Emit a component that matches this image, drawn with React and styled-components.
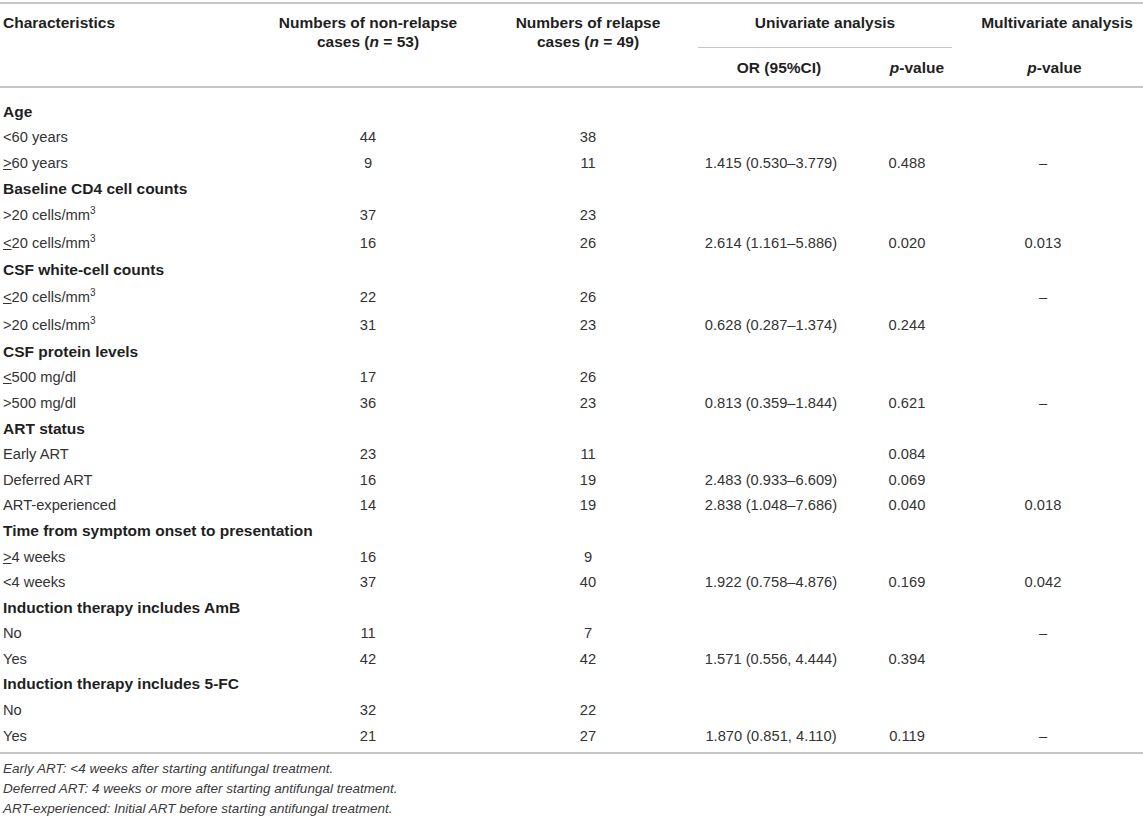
import React from "react";
import styled, { createGlobalStyle } from "styled-components";

const COLS = "262px 212px 228px 154px 110px 1fr";

const GlobalStyle = createGlobalStyle`
  body {
    margin: 0;
    background: #fff;
    font-family: "Liberation Sans", Arial, sans-serif;
    color: #2e2e2e;
  }
`;

// the source typesets ≤ / ≥ as an underlined < / >
const Le = () => <U>&lt;</U>;
const Ge = () => <U>&gt;</U>;
const Cells = () => (
  <>
    cells/mm<Sup>3</Sup>
  </>
);

const rows = [
  { label: "Age", section: true },
  { label: "<60 years", a: "44", b: "38" },
  { label: <><Ge />60 years</>, a: "9", b: "11", or: "1.415 (0.530–3.779)", p: "0.488", m: "–" },
  { label: "Baseline CD4 cell counts", section: true },
  { label: <>&gt;20 <Cells /></>, a: "37", b: "23", tall: true },
  { label: <><Le />20 <Cells /></>, a: "16", b: "26", or: "2.614 (1.161–5.886)", p: "0.020", m: "0.013", tall: true },
  { label: "CSF white-cell counts", section: true },
  { label: <><Le />20 <Cells /></>, a: "22", b: "26", m: "–", tall: true },
  { label: <>&gt;20 <Cells /></>, a: "31", b: "23", or: "0.628 (0.287–1.374)", p: "0.244", tall: true },
  { label: "CSF protein levels", section: true },
  { label: <><Le />500 mg/dl</>, a: "17", b: "26" },
  { label: ">500 mg/dl", a: "36", b: "23", or: "0.813 (0.359–1.844)", p: "0.621", m: "–" },
  { label: "ART status", section: true },
  { label: "Early ART", a: "23", b: "11", p: "0.084" },
  { label: "Deferred ART", a: "16", b: "19", or: "2.483 (0.933–6.609)", p: "0.069" },
  { label: "ART-experienced", a: "14", b: "19", or: "2.838 (1.048–7.686)", p: "0.040", m: "0.018" },
  { label: "Time from symptom onset to presentation", section: true },
  { label: <><Ge />4 weeks</>, a: "16", b: "9" },
  { label: "<4 weeks", a: "37", b: "40", or: "1.922 (0.758–4.876)", p: "0.169", m: "0.042" },
  { label: "Induction therapy includes AmB", section: true },
  { label: "No", a: "11", b: "7", m: "–" },
  { label: "Yes", a: "42", b: "42", or: "1.571 (0.556, 4.444)", p: "0.394" },
  { label: "Induction therapy includes 5-FC", section: true },
  { label: "No", a: "32", b: "22" },
  { label: "Yes", a: "21", b: "27", or: "1.870 (0.851, 4.110)", p: "0.119", m: "–" },
];

const notes = [
  "Early ART: <4 weeks after starting antifungal treatment.",
  "Deferred ART: 4 weeks or more after starting antifungal treatment.",
  "ART-experienced: Initial ART before starting antifungal treatment.",
];

export default function App() {
  return (
    <Page>
      <GlobalStyle />
      <Head>
        <HeadCell $col="1" $row="1 / 3" $left>
          Characteristics
        </HeadCell>
        <HeadCell $col="2" $row="1 / 3">
          Numbers of non-relapse
          <br />
          cases (<I>n</I> = 53)
        </HeadCell>
        <HeadCell $col="3" $row="1 / 3">
          Numbers of relapse
          <br />
          cases (<I>n</I> = 49)
        </HeadCell>
        <GroupCell>Univariate analysis</GroupCell>
        <HeadCell $col="6" $row="1" $pad="0 0 0 5px">
          Multivariate analysis
        </HeadCell>
        <SubHead $col="4">OR (95%CI)</SubHead>
        <SubHead $col="5" $pad="0 0 0 12px">
          <I>p</I>-value
        </SubHead>
        <SubHead $col="6">
          <I>p</I>-value
        </SubHead>
      </Head>
      <Body>
        {rows.map((r, i) =>
          r.section ? (
            <Row key={i}>
              <Section>{r.label}</Section>
            </Row>
          ) : (
            <Row key={i} $tall={r.tall}>
              <Label>{r.label}</Label>
              <Value>{r.a}</Value>
              <Value>{r.b}</Value>
              <Value $pr={16}>{r.or}</Value>
              <Value $pr={8}>{r.p}</Value>
              <Value $pr={23}>{r.m}</Value>
            </Row>
          )
        )}
      </Body>
      <Notes>
        {notes.map((n) => (
          <Note key={n}>{n}</Note>
        ))}
      </Notes>
    </Page>
  );
}

const Page = styled.div`
  width: 1143px;
  padding-top: 2px;
`;

const Head = styled.div`
  display: grid;
  grid-template-columns: ${COLS};
  grid-template-rows: 44px 38px;
  border-top: 2px solid #c6c6c6;
  border-bottom: 2px solid #c6c6c6;
  font-size: 15.5px;
  font-weight: bold;
  color: #1f1f1f;
  line-height: 19px;
`;

const HeadCell = styled.div`
  grid-column: ${(p) => p.$col};
  grid-row: ${(p) => p.$row};
  text-align: ${(p) => (p.$left ? "left" : "center")};
  padding: ${(p) => p.$pad || "0"};
  padding-top: 9px;
  padding-left: ${(p) => (p.$left ? "3px" : undefined)};
`;

const GroupCell = styled.div`
  grid-column: 4 / 6;
  grid-row: 1;
  margin: 0 14px 0 -4px;
  padding-top: 9px;
  text-align: center;
  border-bottom: 1px solid #c6c6c6;
`;

const SubHead = styled.div`
  grid-column: ${(p) => p.$col};
  grid-row: 2;
  align-self: center;
  text-align: center;
  padding: ${(p) => p.$pad || "0"};
`;

const I = styled.i`
  font-style: italic;
`;

const U = styled.span`
  text-decoration: underline;
  text-underline-offset: 1px;
`;

const Body = styled.div`
  padding: 11px 0 4px;
`;

const Row = styled.div`
  display: grid;
  grid-template-columns: ${COLS};
  align-items: center;
  height: ${(p) => (p.$tall ? "28px" : "25.6px")};
  font-size: 14.7px;
  color: #333;
`;

const Section = styled.div`
  grid-column: 1 / -1;
  padding-left: 3px;
  font-size: 15.5px;
  font-weight: bold;
  color: #1f1f1f;
  white-space: nowrap;
`;

const Label = styled.div`
  padding-left: 3px;
  white-space: nowrap;
`;

const Value = styled.div`
  text-align: center;
  padding-right: ${(p) => p.$pr || 0}px;
  white-space: nowrap;
`;

const Sup = styled.sup`
  font-size: 10px;
  line-height: 0;
`;

const Notes = styled.div`
  border-top: 2px solid #c6c6c6;
  padding-top: 5px;
`;

const Note = styled.div`
  font-size: 13.5px;
  font-style: italic;
  line-height: 20px;
  color: #3a3a3a;
  padding-left: 3px;
`;
